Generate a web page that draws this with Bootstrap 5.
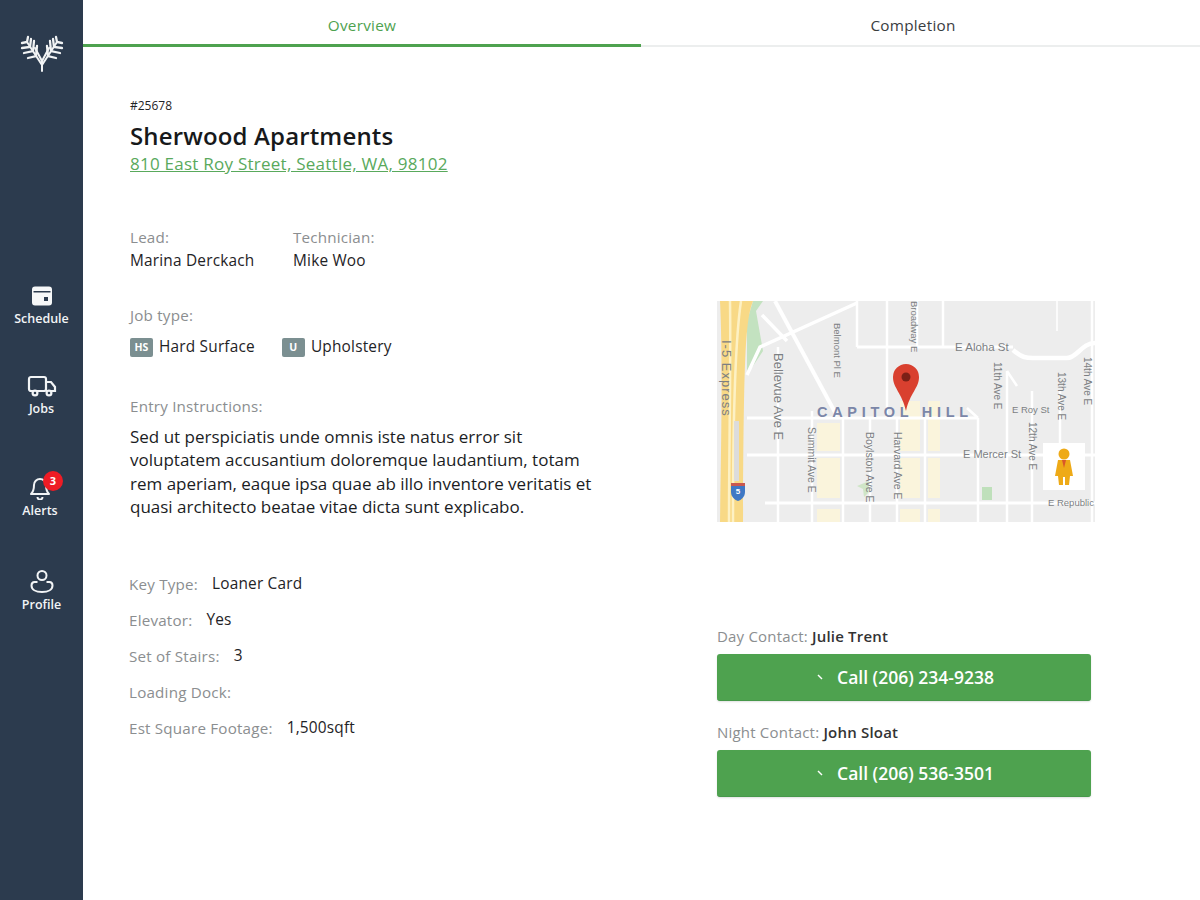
<!DOCTYPE html>
<html lang="en">
<head>
<meta charset="utf-8">
<title>Sherwood Apartments</title>
<link href="https://cdn.jsdelivr.net/npm/bootstrap@5.3.0/dist/css/bootstrap.min.css" rel="stylesheet">
<style>
html,body{height:100%;}
body{font-family:"Open Sans",sans-serif;color:#1f2326;background:#fff;overflow:hidden;font-size:14px;}
.app-shell{height:900px;}
.side-rail{width:83px;flex:none;background:#2c3b4e;color:#f2f4f6;}
.rail-logo{margin-top:34px;height:38px;}
.rail-item{position:relative;font-size:12.5px;font-weight:600;line-height:15px;text-align:center;width:76px;}
.rail-item svg{display:block;margin:0 auto 5px;}
.rail-schedule{margin-top:213px;}
.rail-jobs{margin-top:49px;}
.rail-jobs svg{margin-bottom:4px;}
.rail-alerts{margin-top:60px;margin-right:3px;}
.rail-alerts svg{margin-bottom:3px;}
.rail-profile{margin-top:51px;}
.rail-profile svg{margin-bottom:3px;}
.alert-dot{position:absolute;top:-5px;left:41px;width:20px;height:20px;border-radius:50%;background:#ee1c25;color:#fff;font-size:11px;font-weight:700;line-height:20px;}
.tab-strip{height:47px;border-bottom:2px solid #eceeee;}
.tab-link{height:47px;line-height:50px;font-size:15.3px;text-align:center;color:#3a3d3f;letter-spacing:.25px;}
.tab-on{width:558px;color:#4ea24f;border-bottom:3px solid #4ea24f;}
.tab-off{width:544px;}
.info-col{width:634px;padding-left:47px;flex:none;}
.job-no{font-size:12px;margin-top:51px;line-height:16px;}
.job-title{font-size:24px;font-weight:600;line-height:32px;margin:6px 0 0;color:#17191b;letter-spacing:.15px;}
.job-addr{display:block;font-size:17px;line-height:24px;color:#59a95c;letter-spacing:.25px;}
.muted-label{color:#8b8e90;font-size:15.2px;line-height:20px;letter-spacing:.2px;}
.value-text{font-size:15.4px;line-height:20px;letter-spacing:.2px;}
.people-row{margin-top:51px;}
.person-lead{width:163px;}
.person-lead .value-text,.person-tech .value-text{margin-top:4px;}
.type-block{margin-top:34px;}
.type-row{margin-top:12px;gap:27px;}
.type-chip{display:inline-flex;align-items:center;justify-content:center;width:23px;height:19px;background:#7b8f91;color:#fff;font-size:10.5px;font-weight:700;border-radius:2px;margin-right:6px;}
.entry-block{margin-top:39px;}
.entry-text{font-size:17px;line-height:23.3px;margin:9px 0 0;color:#1b1d1f;width:480px;}
.spec-list{margin-top:54px;}
.spec-row{height:36px;display:flex;gap:14px;margin-left:-1px;}
.spec-row .muted-label{line-height:24px;}
.spec-row .value-text{line-height:24px;}
.aside-col{width:378px;flex:none;padding-top:254px;}
.map-box{display:block;width:378px;height:221px;}
.contact-line{font-size:15px;line-height:20px;color:#8b8e90;letter-spacing:.2px;}
.contact-line b{font-weight:600;color:#333;}
.call-btn{width:374px;height:47px;background:#4ea24f;border:0;border-bottom:1px solid #46984a;border-radius:3px;color:#fff;font-size:17.5px;font-weight:600;gap:14px;padding-left:15px;box-shadow:0 1px 2px rgba(0,0,0,.12);}
.call-btn:hover{background:#4ea24f;color:#fff;}
.contact-day{margin-top:104px;}
.contact-night{margin-top:21px;}
.call-gap{margin-top:8px;}
</style>
</head>
<body>
<div class="app-shell d-flex">
  <nav class="side-rail d-flex flex-column align-items-center">
    <div class="rail-logo">
      <svg width="46" height="38" viewBox="0 0 46 38" fill="none" stroke="#f1f3f4" stroke-linecap="round">
        <path d="M23 37 L23 26 M23 31 L8 8 M23 31 L38 8 M23 27 L16 14 M23 27 L30 14" stroke-width="2"/>
        <path d="M3 9 L8 8 L9 3 M3 14 L11 13 L12 5 M5 19 L14 17 L15 7 M9 24 L17 22 L18 12 M43 9 L38 8 L37 3 M43 14 L35 13 L34 5 M41 19 L32 17 L31 7 M37 24 L29 22 L28 12" stroke-width="2.300"/>
      </svg>
    </div>
    <div class="rail-item rail-schedule">
      <svg width="22" height="21" viewBox="0 0 22 21"><path fill="#f6f7f8" d="M4 1.500h14a3 3 0 0 1 3 3v13a3 3 0 0 1-3 3H4a3 3 0 0 1-3-3v-13a3 3 0 0 1 3-3z"/><path fill="#2c3b4e" d="M2.500 6h17v1.500h-17z"/><rect x="13" y="12" width="4" height="4" fill="#2c3b4e"/></svg>
      Schedule
    </div>
    <div class="rail-item rail-jobs">
      <svg width="30" height="22" viewBox="0 0 30 22" fill="none" stroke="#f2f4f6" stroke-width="2.200"><rect x="2" y="2" width="17" height="14" rx="2"/><path d="M19 7h5l4 5v4h-9"/><circle cx="8" cy="18" r="2.400" fill="#2c3b4e"/><circle cx="22" cy="18" r="2.400" fill="#2c3b4e"/></svg>
      Jobs
    </div>
    <div class="rail-item rail-alerts">
      <svg width="22" height="24" viewBox="0 0 22 24" fill="none" stroke="#f2f4f6" stroke-width="2" stroke-linejoin="round"><path d="M11 3a6 6 0 0 0-6 6c0 5-1 7-3 9h18c-2-2-3-4-3-9a6 6 0 0 0-6-6z"/><path d="M8.500 21a2.500 2.500 0 0 0 5 0"/></svg>
      <span class="alert-dot">3</span>
      Alerts
    </div>
    <div class="rail-item rail-profile">
      <svg width="24" height="25" viewBox="0 0 24 25" fill="none" stroke="#f2f4f6" stroke-width="2"><circle cx="12" cy="6.500" r="4.500"/><path d="M7.500 13H4.500C2.500 13 1.500 14.500 1.500 16.500C1.500 20.500 5.500 23 12 23S22.500 20.500 22.500 16.500C22.500 14.500 21.500 13 19.500 13H16.500"/></svg>
      Profile
    </div>
  </nav>
  <main class="flex-grow-1">
    <div class="tab-strip d-flex">
      <div class="tab-link tab-on">Overview</div>
      <div class="tab-link tab-off">Completion</div>
    </div>
    <div class="d-flex">
      <section class="info-col">
        <div class="job-no">#25678</div>
        <h1 class="job-title">Sherwood Apartments</h1>
        <a class="job-addr" href="#">810 East Roy Street, Seattle, WA, 98102</a>
        <div class="people-row d-flex">
          <div class="person-lead"><div class="muted-label">Lead:</div><div class="value-text">Marina Derckach</div></div>
          <div class="person-tech"><div class="muted-label">Technician:</div><div class="value-text">Mike Woo</div></div>
        </div>
        <div class="type-block">
          <div class="muted-label">Job type:</div>
          <div class="type-row d-flex">
            <div class="value-text d-flex align-items-center"><span class="type-chip">HS</span>Hard Surface</div>
            <div class="value-text d-flex align-items-center"><span class="type-chip">U</span>Upholstery</div>
          </div>
        </div>
        <div class="entry-block">
          <div class="muted-label">Entry Instructions:</div>
          <p class="entry-text">Sed ut perspiciatis unde omnis iste natus error sit voluptatem accusantium doloremque laudantium, totam rem aperiam, eaque ipsa quae ab illo inventore veritatis et quasi architecto beatae vitae dicta sunt explicabo.</p>
        </div>
        <div class="spec-list">
          <div class="spec-row"><span class="muted-label">Key Type:</span><span class="value-text">Loaner Card</span></div>
          <div class="spec-row"><span class="muted-label">Elevator:</span><span class="value-text">Yes</span></div>
          <div class="spec-row"><span class="muted-label">Set of Stairs:</span><span class="value-text">3</span></div>
          <div class="spec-row"><span class="muted-label">Loading Dock:</span></div>
          <div class="spec-row"><span class="muted-label">Est Square Footage:</span><span class="value-text">1,500sqft</span></div>
        </div>
      </section>
      <aside class="aside-col">
        <svg class="map-box" viewBox="0 0 378 221" font-family="Liberation Sans, sans-serif">
          <rect width="378" height="221" fill="#ededed"/>
          <g fill="#faf4dc">
            <rect x="100" y="122" width="23" height="28"/><rect x="100" y="157" width="23" height="40"/><rect x="100" y="208" width="23" height="13"/>
            <rect x="183" y="100" width="20" height="50"/><rect x="211" y="100" width="12" height="50"/><rect x="183" y="157" width="20" height="40"/><rect x="211" y="157" width="12" height="40"/><rect x="183" y="208" width="20" height="13"/><rect x="211" y="208" width="12" height="13"/>
          </g>
          <path d="M36 0 L46 0 L39 10 L46 50 L30 74 L30 20z" fill="#c3e2c0"/>
          <rect x="265" y="186" width="10" height="13" fill="#bfe0bb"/>
          <path d="M140 185l12-5 1 10-6 6-1-8z" fill="#cfe5c7"/>
          <g stroke="#fff" fill="none" stroke-width="2.500">
            <path d="M30 117H261M30 154H378M48 202H378M140 46H296" stroke-width="3"/>
            <path d="M61 46V221M95 110V221M126 117V221M153 117V221M180 117V221M208 117V221M140 0V46M170 0V117M200 0V46M226 0V46"/>
            <path d="M261 117V221M261 117L250 107M290 70V221M315 90V221M343 90V154M375 0V221M290 70L300 85"/>
            <path d="M58 0L120 115" stroke-width="4"/>
            <path d="M45 14L70 40M140 2L43 46L30 74" stroke-width="3.500"/>
            <path d="M296 49C305 57 310 57 316 57H350C360 57 365 42 378 42" stroke-width="4.500"/>
            <path d="M340 30V0" stroke-width="1.500"/>
          </g>
          <path d="M3 0H36C28 20 27 60 26 221H3C4 150 6 60 3 0z" fill="#f8d986"/>
          <path d="M13 0C14 60 12 150 12 221M24 0C18 40 16 120 16 221" stroke="#fdf1c4" stroke-width="2.500" fill="none"/>
          <rect x="17" y="120" width="5" height="60" fill="#dcdcdc"/>
          <g transform="translate(21 190)"><path d="M-7-5H7V1C7 6 3 9 0 10C-3 9-7 6-7 1z" fill="#3f78c4"/><path d="M-7-8H7V-5H-7z" fill="#c9584f"/><text x="0" y="3" font-size="8" font-weight="700" fill="#fff" text-anchor="middle">5</text></g>
          <g fill="#7c7f83" font-size="9.500">
            <text transform="translate(5 39) rotate(90)" font-size="13" letter-spacing="1">I-5 Express</text>
            <text transform="translate(57 52) rotate(90)" font-size="13">Bellevue Ave E</text>
            <text transform="translate(117 22) rotate(90)">Belmont Pl E</text>
            <text transform="translate(91 126) rotate(90)" font-size="10.500">Summit Ave E</text>
            <text transform="translate(149 131) rotate(90)" font-size="10.500">Boylston Ave E</text>
            <text transform="translate(177 131) rotate(90)" font-size="10.500">Harvard Ave E</text>
            <text transform="translate(194 0) rotate(90)">Broadway E</text>
            <text x="238" y="50" font-size="11.500">E Aloha St</text>
            <text transform="translate(277 61) rotate(90)" font-size="10">11th Ave E</text>
            <text transform="translate(312 121) rotate(90)" font-size="10">12th Ave E</text>
            <text transform="translate(341 71) rotate(90)" font-size="10">13th Ave E</text>
            <text transform="translate(367 56) rotate(90)" font-size="10">14th Ave E</text>
            <text x="295" y="112">E Roy St</text>
            <text x="246" y="157" font-size="11">E Mercer St</text>
            <text x="331" y="205">E Republic</text>
          </g>
          <text x="100" y="116" font-size="14.500" font-weight="700" letter-spacing="4.700" fill="#7b86a8">CAPITOL HILL</text>
          <path d="M189 110C185 92 176 87 176 76A13 13 0 0 1 202 76C202 87 193 92 189 110z" fill="#d9402f"/>
          <circle cx="189" cy="76" r="4.500" fill="#7c2016"/>
          <rect x="326" y="142" width="42" height="47" fill="#fff"/>
          <g fill="#eeaa17"><circle cx="347" cy="153" r="5.500"/><path d="M341 159H353L356 175H353L352 184H348V176H346V184H342L341 175H338z"/></g>
          <path d="M345 159H349L347 167z" fill="#d9562a"/>
        </svg>
        <div class="contact-line contact-day">Day Contact: <b>Julie Trent</b></div>
        <a href="#" class="btn call-btn call-gap d-flex align-items-center justify-content-center">
          <svg width="6" height="6" viewBox="0 0 6 6"><path d="M1 1l4 4" stroke="#fff" stroke-width="1.500"/></svg>
          <span>Call (206) 234-9238</span>
        </a>
        <div class="contact-line contact-night">Night Contact: <b>John Sloat</b></div>
        <a href="#" class="btn call-btn call-gap d-flex align-items-center justify-content-center">
          <svg width="6" height="6" viewBox="0 0 6 6"><path d="M1 1l4 4" stroke="#fff" stroke-width="1.500"/></svg>
          <span>Call (206) 536-3501</span>
        </a>
      </aside>
    </div>
  </main>
</div>
<script src="https://cdn.jsdelivr.net/npm/bootstrap@5.3.0/dist/js/bootstrap.bundle.min.js"></script>
</body>
</html>
